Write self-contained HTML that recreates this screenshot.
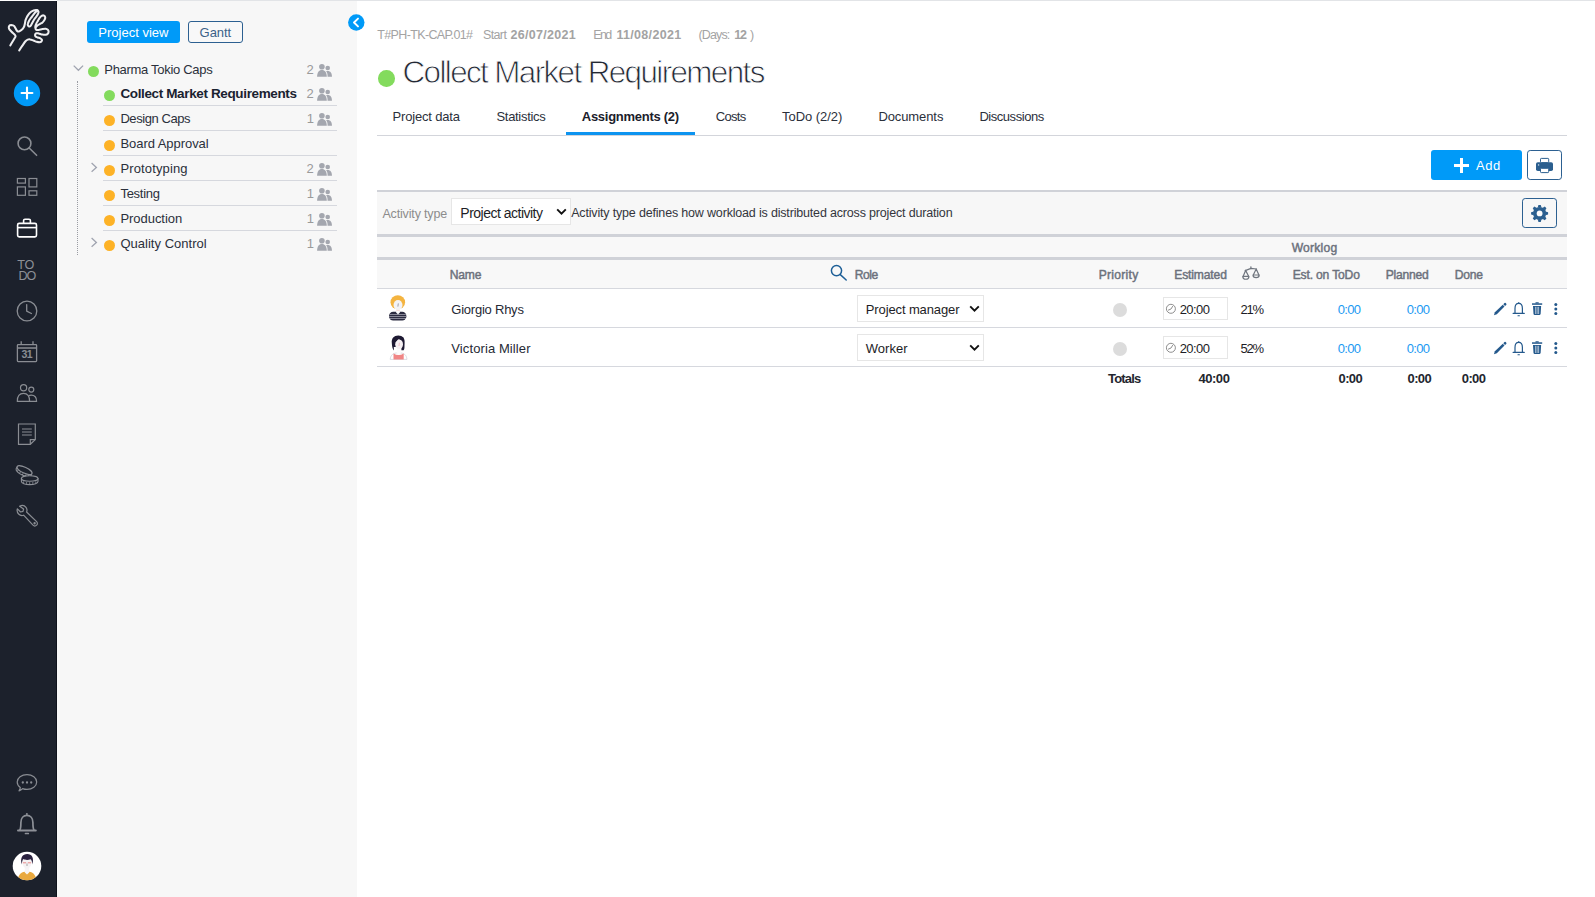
<!DOCTYPE html>
<html lang="en">
<head>
<meta charset="utf-8">
<title>Collect Market Requirements - Assignments</title>
<style>
html,body{margin:0;padding:0}
body{width:1595px;height:897px;position:relative;overflow:hidden;background:#fff;font-family:'Liberation Sans',sans-serif;}
.abs,.t,.dot,.tl,.ppl,.hl,.box,svg.i{position:absolute}
.t{white-space:pre;display:block}
#topline{left:57px;top:0;width:1538px;height:1px;background:#e2e4e7}
#side{left:0;top:1px;width:57px;height:896px;background:#1c212c}
#panel{left:57px;top:1px;width:300px;height:896px;background:#f7f7f7}
.dot{width:11.4px;height:11.4px;border-radius:50%}
.tl{left:103px;width:234px;height:1px;background:#d6d8de}
.ppl{fill:#a4a7af}
#vdots{left:77px;top:81px;width:0;height:174px;border-left:1px dotted #9a9ca3}
.btn{border-radius:3px;box-sizing:border-box}
.hl{background:#d0d2d8}
.rl{position:absolute;left:377px;width:1190px;height:1px;background:#d6d8de}
.sel{position:absolute;background:#fff;border:1px solid #e6e6e6;box-sizing:border-box}
.pri{position:absolute;width:14px;height:14px;border-radius:50%;background:#dcdcdc}
</style>
</head>
<body>
<div class="abs" id="topline"></div>
<div class="abs" id="side"></div>
<div class="abs" id="panel"></div>
<div class="abs" style="left:56px;top:1px;width:1px;height:896px;background:#0e121b"></div>

<!-- left panel buttons -->
<div class="abs btn" style="left:87px;top:21px;width:93px;height:22px;background:#009af8"></div>
<div class="abs btn" style="left:188px;top:21px;width:55px;height:22px;background:#f8f8f8;border:1px solid #2c6091"></div>
<div class="abs" id="vdots"></div>

<!-- collapse handle -->
<svg class="i" style="left:348px;top:14px" width="17" height="17" viewBox="0 0 17 17"><circle cx="8.3" cy="8.5" r="8.2" fill="#009af8"/><path d="M10 4.6 L6 8.5 L10 12.4" fill="none" stroke="#fff" stroke-width="1.9" stroke-linecap="round" stroke-linejoin="round"/></svg>

<!-- title dot -->
<div class="abs" style="left:378px;top:70.2px;width:16.6px;height:16.6px;border-radius:50%;background:#83db5d"></div>

<!-- tabs line -->
<div class="abs" style="left:377px;top:135px;width:1190px;height:1px;background:#d3d5db"></div>
<div class="abs" style="left:566px;top:131.5px;width:129px;height:3.5px;background:#0d94f0"></div>

<!-- add / print buttons -->
<div class="abs btn" style="left:1431px;top:150px;width:91px;height:30px;background:#009af8"></div>
<div class="abs" style="left:1454px;top:163.9px;width:15px;height:3.2px;background:#fff"></div>
<div class="abs" style="left:1459.9px;top:158px;width:3.2px;height:15px;background:#fff"></div>
<div class="abs btn" style="left:1527px;top:150px;width:35px;height:30px;background:#fff;border:1px solid #2c6091;border-radius:3.2px"></div>

<!-- filter bar -->
<div class="abs" style="left:377px;top:192px;width:1190px;height:42px;background:#f7f7f7"></div>
<div class="abs hl" style="left:377px;top:190px;width:1190px;height:2px"></div>
<div class="abs" style="left:377px;top:237px;width:1190px;height:51px;background:#f8f8f8"></div>
<div class="abs hl" style="left:377px;top:234px;width:1190px;height:3px"></div>
<div class="abs hl" style="left:377px;top:257px;width:1190px;height:3px"></div>
<div class="rl" style="top:288px"></div>
<div class="rl" style="top:327px"></div>
<div class="rl" style="top:366px"></div>
<div class="sel" style="left:451px;top:198px;width:120px;height:27px"></div>
<div class="abs btn" style="left:1522px;top:198px;width:35px;height:30px;background:#f7f7f7;border:1px solid #2c6091;border-radius:3.2px"></div>

<!-- row controls -->
<div class="sel" style="left:857px;top:295px;width:127px;height:27px"></div>
<div class="sel" style="left:857px;top:334px;width:127px;height:27px"></div>
<div class="sel" style="left:1163px;top:297px;width:65px;height:23px"></div>
<div class="sel" style="left:1163px;top:336px;width:65px;height:23px"></div>
<div class="pri" style="left:1113px;top:303px"></div>
<div class="pri" style="left:1113px;top:342px"></div>


<!-- ===== sidebar icons ===== -->
<svg class="i" style="left:0;top:0" width="57" height="57" viewBox="0 0 57 57"><path d="M10.8 45.4 C11.5 44.2 14.3 39.7 15.2 38.1 C16.1 36.5 16.4 36.6 15.9 35.6 C15.4 34.6 13.2 33.0 12.1 31.8 C11.0 30.6 9.9 29.6 9.5 28.6 C9.1 27.6 9.4 26.3 9.8 25.7 C10.2 25.1 11.0 25.1 11.8 25.1 C12.6 25.2 13.9 25.4 14.6 26.0 C15.3 26.6 15.7 27.8 16.2 28.6 C16.7 29.5 17.2 30.6 17.8 31.1 C18.4 31.6 18.9 31.6 19.7 31.4 C20.5 31.1 21.7 30.3 22.5 29.6 C23.3 28.9 23.9 27.9 24.4 27.0 C24.9 26.1 25.0 25.0 25.3 23.9 C25.6 22.8 25.7 21.4 26.0 20.3 C26.3 19.2 26.7 18.4 27.1 17.6 C27.5 16.8 27.9 16.1 28.4 15.4 C28.9 14.7 29.4 13.9 30.0 13.3 C30.6 12.7 31.2 12.1 31.8 11.7 C32.4 11.3 33.1 10.9 33.6 10.7 C34.1 10.4 34.5 10.3 35.0 10.2 C35.5 10.1 35.9 10.0 36.3 10.0 C36.7 10.0 37.1 10.0 37.5 10.1 C37.9 10.2 38.2 10.4 38.5 10.7 C38.8 11.0 38.9 11.3 39.0 11.7 C39.1 12.1 39.0 12.4 38.9 12.9 C38.8 13.4 38.5 13.9 38.3 14.4 C38.0 14.9 37.7 15.3 37.4 15.8 C37.1 16.3 36.7 16.8 36.3 17.3 C35.9 17.8 35.4 18.4 35.0 19.0 C34.6 19.6 34.2 20.3 33.8 21.0 C33.4 21.7 33.0 22.4 32.7 23.0 C32.4 23.6 32.1 24.2 31.8 24.7 C31.5 25.2 31.4 25.6 31.1 25.9 C30.8 26.2 30.5 26.5 30.1 26.5 C29.8 26.5 29.3 26.3 29.0 26.1 C28.7 25.9 28.5 25.6 28.4 25.2 C28.3 24.8 28.2 24.3 28.3 23.9 C28.4 23.4 28.6 23.0 28.8 22.5 C29.0 22.0 29.3 21.3 29.6 20.7 C29.9 20.1 30.3 19.6 30.7 19.0 C31.1 18.4 31.6 17.8 32.1 17.1 C32.6 16.5 33.1 15.7 33.6 15.1 C34.1 14.5 34.5 13.9 34.9 13.4 C35.3 12.9 35.7 12.6 36.0 12.3 C36.3 12.0 36.8 11.7 36.9 11.6 M36.2 28.6 C36.1 28.4 35.8 27.7 35.8 27.2 C35.8 26.7 35.9 26.0 36.1 25.4 C36.3 24.8 36.6 24.0 36.9 23.4 C37.2 22.8 37.6 22.1 38.0 21.5 C38.4 20.9 38.7 20.1 39.1 19.5 C39.5 18.9 39.9 18.2 40.3 17.7 C40.7 17.1 41.2 16.6 41.7 16.2 C42.2 15.8 42.6 15.5 43.1 15.4 C43.6 15.3 44.2 15.4 44.6 15.6 C45.0 15.8 45.3 16.2 45.5 16.6 C45.7 17.0 45.8 17.6 45.7 18.1 C45.7 18.6 45.5 19.0 45.2 19.5 C44.9 20.0 44.5 20.6 44.1 21.2 C43.7 21.8 43.2 22.4 42.6 22.8 C42.0 23.2 41.3 23.5 40.6 23.9 C39.9 24.3 39.2 24.6 38.6 25.0 C38.0 25.4 37.4 25.8 37.0 26.3 C36.6 26.8 36.0 27.6 36.0 28.2 C36.0 28.8 36.3 29.5 36.8 29.8 C37.3 30.1 38.2 30.1 39.2 30.0 C40.2 29.9 41.8 29.2 43.0 29.0 C44.2 28.8 45.3 28.6 46.2 28.7 C47.1 28.8 47.8 29.3 48.3 29.8 C48.8 30.3 49.1 30.9 49.1 31.6 C49.1 32.3 48.8 33.3 48.3 33.8 C47.8 34.3 47.1 34.7 46.2 34.8 C45.3 34.9 44.2 34.8 43.0 34.6 C41.8 34.4 40.2 33.7 39.2 33.5 C38.2 33.3 37.4 33.0 36.8 33.2 C36.2 33.4 35.7 34.1 35.6 34.6 C35.5 35.1 35.6 35.9 36.0 36.4 C36.4 36.9 37.4 37.2 38.2 37.5 C39.0 37.8 40.1 37.9 40.8 38.3 C41.5 38.7 42.2 39.2 42.4 39.7 C42.6 40.2 42.3 41.1 41.9 41.5 C41.5 41.9 40.8 42.2 40.0 42.3 C39.2 42.3 38.1 42.1 37.1 41.8 C36.1 41.5 35.0 40.9 33.9 40.5 C32.8 40.1 31.6 39.5 30.7 39.4 C29.8 39.2 29.0 39.3 28.2 39.6 C27.4 39.9 26.9 40.3 26.0 41.3 C25.1 42.3 23.9 44.2 22.9 45.7 C21.8 47.2 20.2 49.7 19.7 50.5" fill="none" stroke="#eeeef0" stroke-width="2.05" transform="translate(-0.5 0)" stroke-linecap="round" stroke-linejoin="round"/></svg>
<svg class="i" style="left:13px;top:79px" width="28" height="28" viewBox="0 0 28 28"><circle cx="14" cy="14" r="13.2" fill="#009af8"/><path d="M14 8.6V19.4M8.6 14H19.4" stroke="#fff" stroke-width="2.1" stroke-linecap="round"/></svg>
<svg class="i" style="left:14px;top:134px" width="28" height="26" viewBox="14 134 28 26" fill="none" stroke="#8a8d93" stroke-width="1.6"><circle cx="24.5" cy="143.4" r="6.4"/><path d="M29.2 148L36.6 155.3" stroke-linecap="round"/></svg>
<svg class="i" style="left:14px;top:175px" width="28" height="24" viewBox="14 175 28 24" fill="none" stroke="#8a8d93" stroke-width="1.2"><rect x="17.4" y="178.5" width="8" height="4.6"/><rect x="29" y="178.5" width="7.8" height="8.4"/><rect x="17.4" y="186.9" width="8" height="8.4"/><rect x="29" y="190.8" width="7.8" height="4.5"/></svg>
<svg class="i" style="left:14px;top:215px" width="28" height="26" viewBox="14 215 28 26" fill="none" stroke="#fff" stroke-width="1.6" stroke-linejoin="round"><rect x="17.6" y="223.4" width="18.9" height="13.5" rx="1.6"/><path d="M23.6 223.2V220.6Q23.6 219.2 25 219.2H29Q30.4 219.2 30.4 220.6V223.2"/><path d="M17.6 227.6H36.5"/></svg>
<svg class="i" style="left:14px;top:298px" width="28" height="26" viewBox="14 298 28 26" fill="none" stroke="#8a8d93" stroke-width="1.3"><circle cx="27" cy="311" r="9.8"/><path d="M26.7 304.6V311.2L31.4 313.5" stroke-linecap="round" stroke-linejoin="round"/></svg>
<svg class="i" style="left:14px;top:338px" width="28" height="28" viewBox="14 338 28 28" fill="none" stroke="#8a8d93" stroke-width="1.3"><rect x="17.4" y="344.6" width="19.2" height="17" rx="0.8"/><path d="M17.4 348H36.6M21.2 341.3V344.6M33 341.3V344.6"/></svg>
<svg class="i" style="left:14px;top:380px" width="28" height="26" viewBox="14 380 28 26" fill="none" stroke="#8a8d93" stroke-width="1.2"><circle cx="23.6" cy="387.8" r="3.1"/><circle cx="31.3" cy="389.6" r="2.5"/><path d="M17.3 401.4C17.3 396.4 19.8 393.4 23.5 393.4C27.2 393.4 29.6 396.4 29.6 401.4Z" stroke-linejoin="round"/><path d="M28.6 395.9C29.3 395.4 30.2 395.2 31.2 395.2C34.5 395.2 36.6 397.6 36.6 401.4H29.6" stroke-linejoin="round"/></svg>
<svg class="i" style="left:14px;top:420px" width="28" height="28" viewBox="14 420 28 28" fill="none" stroke="#8a8d93" stroke-width="1.2"><path d="M18.5 424H35.3V439.6L30.3 444.3H18.5Z" stroke-linejoin="miter"/><path d="M30.3 444.3V439.6H35.3"/><path d="M22 429H31.8M22 432H31.8M22 435H31.8"/></svg>
<svg class="i" style="left:13px;top:462px" width="30" height="26" viewBox="13 462 30 26" fill="none" stroke="#8d9097" stroke-width="1.1"><g transform="translate(0 0.7) rotate(25 24.3 470)"><path d="M16.1 469.4V471.7C16.1 473.4 19.8 474.8 24.3 474.8C28.8 474.8 32.5 473.4 32.5 471.7V469.4"/><ellipse cx="24.3" cy="469.4" rx="8.2" ry="2.9"/><path d="M18.4 472v2M21.2 472.6v2.1M24.3 472.8v2.1M27.4 472.6v2.1M30.2 472v2" stroke-width="0.8"/></g><path d="M21.4 478.5V481.5C21.4 483.2 25.1 484.6 29.7 484.6C34.3 484.6 38 483.2 38 481.5V478.5Z" fill="#1c212c"/><ellipse cx="29.7" cy="478.5" rx="8.3" ry="2.7" fill="#1c212c"/><path d="M23.6 481.4v2.2M26.6 482v2.2M29.7 482.2v2.2M32.8 482v2.2M35.8 481.4v2.2" stroke-width="0.8"/></svg>
<svg class="i" style="left:13px;top:502px" width="30" height="28" viewBox="13 502 30 28" fill="none" stroke="#8a8d93" stroke-width="1.2" stroke-linejoin="round"><path d="M19.6 506.2C21.8 505 24.6 505.5 26 507.4C27.1 508.9 27.2 510.6 26.6 512L36.6 521.6C37.6 522.6 37.6 524.2 36.6 525.2C35.6 526.2 34 526.2 33 525.2L23.6 515.2C22 515.8 20 515.4 18.6 514C17.2 512.6 16.8 510.6 17.4 508.8L20.6 512L23 511.4L23.6 509Z"/><circle cx="34.6" cy="523.3" r="0.6"/></svg>
<svg class="i" style="left:14px;top:771px" width="28" height="24" viewBox="14 771 28 24" fill="none" stroke="#8a8d93" stroke-width="1.2" stroke-linejoin="round"><path d="M27 774.6C32.4 774.6 36.7 777.9 36.7 782C36.7 786.1 32.4 789.4 27 789.4C25.4 789.4 23.9 789.1 22.6 788.6C21.6 789.6 20.4 790.4 19 790.8C19.8 789.8 20.2 788.8 20.3 787.6C18.4 786.2 17.2 784.2 17.2 782C17.2 777.9 21.6 774.6 27 774.6Z"/><g fill="#8a8d93" stroke="none"><circle cx="22.8" cy="782.5" r="1.15"/><circle cx="27" cy="782.5" r="1.15"/><circle cx="31.2" cy="782.5" r="1.15"/></g></svg>
<svg class="i" style="left:14px;top:810px" width="28" height="28" viewBox="14 810 28 28" fill="none" stroke="#8d9097" stroke-width="1.7" stroke-linejoin="round"><path d="M19.6 830.3C20.7 829 20.9 827 20.9 822.4C20.9 818 23.5 815.3 26.9 815.3C30.3 815.3 32.9 818 32.9 822.4C32.9 827 33.1 829 34.2 830.3"/><path d="M18 830.5H35.8" stroke-width="2" stroke-linecap="round"/><path d="M25.5 833.5H28.3" stroke-width="1.7" stroke-linecap="round"/><circle cx="26.9" cy="814" r="1" fill="#8d9097" stroke="none"/></svg>
<!-- user avatar -->
<svg class="i" style="left:12px;top:851px" width="30" height="30" viewBox="0 0 30 30"><defs><clipPath id="avc"><circle cx="15" cy="15" r="14.3"/></clipPath></defs><circle cx="15" cy="15" r="14.3" fill="#fff"/><g clip-path="url(#avc)"><path d="M5.8 30C5.8 23.4 9.4 20.4 15 20.4C20.6 20.4 24.2 23.4 24.2 30Z" fill="#e9a93f"/><path d="M12.8 16H17.2V21.4L15 23.4L12.8 21.4Z" fill="#f6f4f6"/><ellipse cx="15" cy="11.9" rx="4.5" ry="5.5" fill="#f5f2f4"/><path d="M9.8 13.4C7.8 7 10.6 3 15.2 3C20 3 22.2 7 20.4 13.4C20.2 10.8 19.6 9.2 18.6 8.2C16 9.4 12.8 9 11.2 8C10.4 9.2 10 11 9.8 13.4Z" fill="#2a2240"/><path d="M10.8 11.8H14.2M15.8 11.8H19.2" stroke="#e88a8a" stroke-width="1" fill="none"/><path d="M15 12.5V15" stroke="#555" stroke-width="0.5"/></g></svg>


<!-- tree chevrons -->
<svg class="i" style="left:72px;top:63px" width="13" height="10" viewBox="72 63 13 10"><path d="M73.7 65.6L78.4 70.3L83.1 65.6" fill="none" stroke="#a0a4b0" stroke-width="1.3"/></svg>
<svg class="i" style="left:89px;top:161px" width="10" height="13" viewBox="89 161 10 13"><path d="M91.6 163L96.4 167.4L91.6 171.8" fill="none" stroke="#a0a4b0" stroke-width="1.3"/></svg>
<svg class="i" style="left:89px;top:236px" width="10" height="13" viewBox="89 236 10 13"><path d="M91.6 238L96.4 242.4L91.6 246.8" fill="none" stroke="#a0a4b0" stroke-width="1.3"/></svg>
<!-- select arrows -->
<svg class="i" style="left:556px;top:207.5px" width="11" height="8" viewBox="0 0 11 8"><path d="M1.2 1.3L5.5 5.6L9.8 1.3" fill="none" stroke="#111" stroke-width="1.9"/></svg><svg class="i" style="left:969px;top:304.5px" width="11" height="8" viewBox="0 0 11 8"><path d="M1.2 1.3L5.5 5.6L9.8 1.3" fill="none" stroke="#111" stroke-width="1.9"/></svg><svg class="i" style="left:969px;top:343.5px" width="11" height="8" viewBox="0 0 11 8"><path d="M1.2 1.3L5.5 5.6L9.8 1.3" fill="none" stroke="#111" stroke-width="1.9"/></svg>
<!-- printer -->
<svg class="i" style="left:1534px;top:156px" width="22" height="19" viewBox="1534 156 22 19"><rect x="1536" y="162.3" width="17" height="8.7" rx="1.8" fill="#2b5f8f"/><rect x="1540.5" y="158.4" width="8.2" height="4.2" rx="0.8" fill="#fff" stroke="#2b5f8f" stroke-width="1"/><rect x="1540.5" y="168.3" width="8.2" height="4.3" rx="0.8" fill="#fff" stroke="#2b5f8f" stroke-width="1"/><circle cx="1538.6" cy="164.9" r="0.7" fill="#e8eef4"/></svg>
<!-- gear -->
<svg class="i" style="left:1529px;top:203px" width="21" height="21" viewBox="-10.6 -10.4 21 21"><g fill="#2b5f8f"><circle r="6.5"/><path d="M-1.9 -5.8L-1.15 -8.5H1.15L1.9 -5.8Z"/><path d="M-1.9 -5.8L-1.15 -8.5H1.15L1.9 -5.8Z" transform="rotate(45)"/><path d="M-1.9 -5.8L-1.15 -8.5H1.15L1.9 -5.8Z" transform="rotate(90)"/><path d="M-1.9 -5.8L-1.15 -8.5H1.15L1.9 -5.8Z" transform="rotate(135)"/><path d="M-1.9 -5.8L-1.15 -8.5H1.15L1.9 -5.8Z" transform="rotate(180)"/><path d="M-1.9 -5.8L-1.15 -8.5H1.15L1.9 -5.8Z" transform="rotate(225)"/><path d="M-1.9 -5.8L-1.15 -8.5H1.15L1.9 -5.8Z" transform="rotate(270)"/><path d="M-1.9 -5.8L-1.15 -8.5H1.15L1.9 -5.8Z" transform="rotate(315)"/></g><circle r="2.9" fill="#fbfbfb"/></svg>
<!-- header search + scale -->
<svg class="i" style="left:829px;top:263px" width="20" height="20" viewBox="829 263 20 20" fill="none" stroke="#1d5f97" stroke-width="1.5"><circle cx="836.5" cy="270.6" r="5.1"/><path d="M840.3 274.6L846.2 280" stroke-linecap="round"/></svg>
<svg class="i" style="left:1240px;top:265px" width="22" height="17" viewBox="1240 265 22 17" fill="none" stroke="#70767f" stroke-width="1.2" stroke-linecap="round" stroke-linejoin="round"><path d="M1245.2 270.6L1251 268.4L1256.4 269"/><path d="M1250.9 266.8V268.6"/><path d="M1245.6 270.4L1243.2 276.2M1245.6 270.4L1248.6 276.2"/><path d="M1242.8 276.4H1248.9C1248.9 280.2 1242.8 280.2 1242.8 276.4Z"/><path d="M1256.2 269L1253.4 274.8M1256.2 269L1258.8 274.8"/><path d="M1253 275H1259.2C1259.2 278.6 1253 278.6 1253 275Z"/></svg>
<svg class="i" style="left:1165px;top:303px" width="12" height="12" viewBox="1165 303 12 12" fill="none" stroke="#808080" stroke-width="0.9"><circle cx="1170.9" cy="308.8" r="4.5"/><path d="M1168.4 310.1L1171 309L1172.6 306.4" stroke-linecap="round" stroke-linejoin="round"/></svg><svg class="i" style="left:1165px;top:342px" width="12" height="12" viewBox="1165 303 12 12" fill="none" stroke="#808080" stroke-width="0.9"><circle cx="1170.9" cy="308.8" r="4.5"/><path d="M1168.4 310.1L1171 309L1172.6 306.4" stroke-linecap="round" stroke-linejoin="round"/></svg>
<svg class="i" style="left:388px;top:295px" width="20" height="27" viewBox="388 295 20 27"><rect x="389" y="311.8" width="17.4" height="8.8" rx="4.2" fill="#2b2b40"/><path d="M389.6 314.5H405.8M389.1 316.5H406.3M389.4 318.5H406" stroke="#d4d4de" stroke-width="0.55"/><path d="M396.2 309H399.8V312.4L398 314.6L396.2 312.4Z" fill="#fbfbfc"/><path d="M396.2 310.2H399.8" stroke="#f3c9c4" stroke-width="0.8"/><ellipse cx="397.8" cy="302.3" rx="7.3" ry="7" fill="#f4b440"/><ellipse cx="398" cy="305" rx="4.5" ry="5.1" fill="#f3f3f6"/><path d="M398.3 303.4L397.9 306.6" stroke="#4a4a5a" stroke-width="0.5"/></svg><svg class="i" style="left:388px;top:334px" width="21" height="27" viewBox="388 334 21 27"><path d="M390.2 359.4C390.6 355.2 392.8 352.8 398.6 352.8C404.4 352.8 406.6 355.2 407 359.4Z" fill="#fff" stroke="#c4c4cf" stroke-width="0.6"/><path d="M393.5 359.5V353.4Q398.6 356.4 403.7 353.4V359.5Z" fill="#f08585"/><path d="M396.7 348.6H400.9V353L398.8 354.8L396.7 353Z" fill="#fbfbfc"/><path d="M391.8 343C391.3 338.4 394 335.5 398.2 335.5C402.8 335.5 405.2 338.6 404.6 343.2C404.3 346.4 404.9 348.6 403.6 350.3H401.4V347H393.8L394 350.4C392.2 349 392.1 346 391.8 343Z" fill="#1e1a33"/><ellipse cx="399.1" cy="344.2" rx="3.9" ry="4.9" fill="#f6f0f3"/><path d="M394.6 342.6C396.4 341.6 397.8 340 398.4 338.2C399.8 339.6 401.8 340.4 403.6 340.6L403.2 337.2L397.4 336.2L394.4 338.8Z" fill="#1e1a33"/><path d="M399.4 342.8L399 346" stroke="#e9a0a8" stroke-width="0.6"/></svg>

<svg class="i" style="left:1491px;top:300px" width="70" height="18" viewBox="1491 300 70 18">
<g fill="#24598c" stroke="none">
<path d="M1493.9 315.2L1494.9 312.2L1502.75 304.7L1504.5 306.5L1496.8 314.2Z"/>
<path d="M1503.3 304.15L1504.5 303Q1505.1 302.5 1505.7 303.1L1506.3 303.7Q1506.8 304.3 1506.2 304.9L1505.05 306Z"/>
<rect x="1532" y="303.3" width="10.2" height="1.5"/><rect x="1535.4" y="302.2" width="3.4" height="1.4" rx="0.5"/>
<path d="M1533 306H1541.1L1540.6 314.1Q1540.5 314.9 1539.7 314.9H1534.4Q1533.6 314.9 1533.5 314.1Z"/>
<circle cx="1555.8" cy="304.5" r="1.5"/><circle cx="1555.8" cy="309.1" r="1.5"/><circle cx="1555.8" cy="313.6" r="1.5"/>
</g>
<g stroke="#dfe7ef" stroke-width="0.7"><path d="M1535.6 306.8V314M1537.1 306.8V314M1538.6 306.8V314"/></g>
<g fill="none" stroke="#24598c" stroke-width="1.2" stroke-linejoin="round"><path d="M1515 313.2V308.4C1515 305.4 1516.5 303.4 1518.7 303.4C1520.9 303.4 1522.4 305.4 1522.4 308.4V313.2"/><path d="M1513.2 313.4H1524.2" stroke-width="1.3" stroke-linecap="round"/><path d="M1518 315.7H1519.4" stroke-width="1.1" stroke-linecap="round"/><path d="M1518.7 302.3V303.4" stroke-width="1.2"/></g>
</svg>
<svg class="i" style="left:1491px;top:339px" width="70" height="18" viewBox="1491 300 70 18">
<g fill="#24598c" stroke="none">
<path d="M1493.9 315.2L1494.9 312.2L1502.75 304.7L1504.5 306.5L1496.8 314.2Z"/>
<path d="M1503.3 304.15L1504.5 303Q1505.1 302.5 1505.7 303.1L1506.3 303.7Q1506.8 304.3 1506.2 304.9L1505.05 306Z"/>
<rect x="1532" y="303.3" width="10.2" height="1.5"/><rect x="1535.4" y="302.2" width="3.4" height="1.4" rx="0.5"/>
<path d="M1533 306H1541.1L1540.6 314.1Q1540.5 314.9 1539.7 314.9H1534.4Q1533.6 314.9 1533.5 314.1Z"/>
<circle cx="1555.8" cy="304.5" r="1.5"/><circle cx="1555.8" cy="309.1" r="1.5"/><circle cx="1555.8" cy="313.6" r="1.5"/>
</g>
<g stroke="#dfe7ef" stroke-width="0.7"><path d="M1535.6 306.8V314M1537.1 306.8V314M1538.6 306.8V314"/></g>
<g fill="none" stroke="#24598c" stroke-width="1.2" stroke-linejoin="round"><path d="M1515 313.2V308.4C1515 305.4 1516.5 303.4 1518.7 303.4C1520.9 303.4 1522.4 305.4 1522.4 308.4V313.2"/><path d="M1513.2 313.4H1524.2" stroke-width="1.3" stroke-linecap="round"/><path d="M1518 315.7H1519.4" stroke-width="1.1" stroke-linecap="round"/><path d="M1518.7 302.3V303.4" stroke-width="1.2"/></g>
</svg>

<span class="t" style="left:104.3px;top:63.23px;font-size:13px;line-height:14.52px;letter-spacing:-0.301px;color:#2b303b;">Pharma Tokio Caps</span>
<span class="t" style="left:306.5px;top:63.23px;font-size:13px;line-height:14.52px;letter-spacing:-1.034px;color:#9a9a9a;">2</span>
<svg class="ppl" style="left:317px;top:63.9px" width="16" height="13" viewBox="0 0 16 13"><circle cx="4.9" cy="2.8" r="2.8"/><path d="M0.1 12.7C0.1 8.4 1.9 5.9 4.9 5.9C7.9 5.9 9.8 8.4 9.8 12.7Z"/><circle cx="10.7" cy="4" r="2.3"/><path d="M10.6 12.7C10.6 10 10.1 8.3 9.1 7.3C9.6 7 10.2 6.9 10.8 6.9C13.4 6.9 15 9 15 12.7Z"/></svg>
<div class="dot" style="left:87.7px;top:65.7px;background:#83db5d"></div>
<span class="t" style="left:120.4px;top:86.08px;font-size:13.5px;line-height:15.08px;letter-spacing:-0.364px;color:#1a2230;font-weight:700;">Collect Market Requirements</span>
<span class="t" style="left:306.5px;top:86.53px;font-size:13px;line-height:14.52px;letter-spacing:-1.034px;color:#9a9a9a;">2</span>
<svg class="ppl" style="left:317px;top:87.9px" width="16" height="13" viewBox="0 0 16 13"><circle cx="4.9" cy="2.8" r="2.8"/><path d="M0.1 12.7C0.1 8.4 1.9 5.9 4.9 5.9C7.9 5.9 9.8 8.4 9.8 12.7Z"/><circle cx="10.7" cy="4" r="2.3"/><path d="M10.6 12.7C10.6 10 10.1 8.3 9.1 7.3C9.6 7 10.2 6.9 10.8 6.9C13.4 6.9 15 9 15 12.7Z"/></svg>
<div class="dot" style="left:103.5px;top:90.1px;background:#83db5d"></div>
<span class="t" style="left:120.4px;top:111.53px;font-size:13px;line-height:14.52px;letter-spacing:-0.424px;color:#2b303b;">Design Caps</span>
<span class="t" style="left:306.7px;top:111.53px;font-size:13px;line-height:14.52px;letter-spacing:-2.834px;color:#9a9a9a;">1</span>
<svg class="ppl" style="left:317px;top:112.9px" width="16" height="13" viewBox="0 0 16 13"><circle cx="4.9" cy="2.8" r="2.8"/><path d="M0.1 12.7C0.1 8.4 1.9 5.9 4.9 5.9C7.9 5.9 9.8 8.4 9.8 12.7Z"/><circle cx="10.7" cy="4" r="2.3"/><path d="M10.6 12.7C10.6 10 10.1 8.3 9.1 7.3C9.6 7 10.2 6.9 10.8 6.9C13.4 6.9 15 9 15 12.7Z"/></svg>
<div class="dot" style="left:103.5px;top:115.1px;background:#fdb226"></div>
<span class="t" style="left:120.4px;top:136.54px;font-size:13px;line-height:14.52px;letter-spacing:-0.047px;color:#2b303b;">Board Approval</span>
<div class="dot" style="left:103.5px;top:140.1px;background:#fdb226"></div>
<span class="t" style="left:120.4px;top:161.54px;font-size:13px;line-height:14.52px;letter-spacing:0.143px;color:#2b303b;">Prototyping</span>
<span class="t" style="left:306.5px;top:161.54px;font-size:13px;line-height:14.52px;letter-spacing:-1.034px;color:#9a9a9a;">2</span>
<svg class="ppl" style="left:317px;top:162.9px" width="16" height="13" viewBox="0 0 16 13"><circle cx="4.9" cy="2.8" r="2.8"/><path d="M0.1 12.7C0.1 8.4 1.9 5.9 4.9 5.9C7.9 5.9 9.8 8.4 9.8 12.7Z"/><circle cx="10.7" cy="4" r="2.3"/><path d="M10.6 12.7C10.6 10 10.1 8.3 9.1 7.3C9.6 7 10.2 6.9 10.8 6.9C13.4 6.9 15 9 15 12.7Z"/></svg>
<div class="dot" style="left:103.5px;top:165.1px;background:#fdb226"></div>
<span class="t" style="left:120.4px;top:186.54px;font-size:13px;line-height:14.52px;letter-spacing:-0.251px;color:#2b303b;">Testing</span>
<span class="t" style="left:306.7px;top:186.54px;font-size:13px;line-height:14.52px;letter-spacing:-2.834px;color:#9a9a9a;">1</span>
<svg class="ppl" style="left:317px;top:187.9px" width="16" height="13" viewBox="0 0 16 13"><circle cx="4.9" cy="2.8" r="2.8"/><path d="M0.1 12.7C0.1 8.4 1.9 5.9 4.9 5.9C7.9 5.9 9.8 8.4 9.8 12.7Z"/><circle cx="10.7" cy="4" r="2.3"/><path d="M10.6 12.7C10.6 10 10.1 8.3 9.1 7.3C9.6 7 10.2 6.9 10.8 6.9C13.4 6.9 15 9 15 12.7Z"/></svg>
<div class="dot" style="left:103.5px;top:190.1px;background:#fdb226"></div>
<span class="t" style="left:120.4px;top:211.54px;font-size:13px;line-height:14.52px;letter-spacing:-0.040px;color:#2b303b;">Production</span>
<span class="t" style="left:306.7px;top:211.54px;font-size:13px;line-height:14.52px;letter-spacing:-2.834px;color:#9a9a9a;">1</span>
<svg class="ppl" style="left:317px;top:212.9px" width="16" height="13" viewBox="0 0 16 13"><circle cx="4.9" cy="2.8" r="2.8"/><path d="M0.1 12.7C0.1 8.4 1.9 5.9 4.9 5.9C7.9 5.9 9.8 8.4 9.8 12.7Z"/><circle cx="10.7" cy="4" r="2.3"/><path d="M10.6 12.7C10.6 10 10.1 8.3 9.1 7.3C9.6 7 10.2 6.9 10.8 6.9C13.4 6.9 15 9 15 12.7Z"/></svg>
<div class="dot" style="left:103.5px;top:215.1px;background:#fdb226"></div>
<span class="t" style="left:120.4px;top:236.54px;font-size:13px;line-height:14.52px;letter-spacing:0.023px;color:#2b303b;">Quality Control</span>
<span class="t" style="left:306.7px;top:236.54px;font-size:13px;line-height:14.52px;letter-spacing:-2.834px;color:#9a9a9a;">1</span>
<svg class="ppl" style="left:317px;top:237.9px" width="16" height="13" viewBox="0 0 16 13"><circle cx="4.9" cy="2.8" r="2.8"/><path d="M0.1 12.7C0.1 8.4 1.9 5.9 4.9 5.9C7.9 5.9 9.8 8.4 9.8 12.7Z"/><circle cx="10.7" cy="4" r="2.3"/><path d="M10.6 12.7C10.6 10 10.1 8.3 9.1 7.3C9.6 7 10.2 6.9 10.8 6.9C13.4 6.9 15 9 15 12.7Z"/></svg>
<div class="dot" style="left:103.5px;top:240.1px;background:#fdb226"></div>
<div class="tl" style="top:105px"></div>
<div class="tl" style="top:130px"></div>
<div class="tl" style="top:155px"></div>
<div class="tl" style="top:180px"></div>
<div class="tl" style="top:205px"></div>
<div class="tl" style="top:230px"></div>
<span class="t" style="left:377.3px;top:28.79px;font-size:12.5px;line-height:13.96px;letter-spacing:-0.641px;color:#a3a3a3;">T#PH-TK-CAP.01#</span>
<span class="t" style="left:482.9px;top:28.79px;font-size:12.5px;line-height:13.96px;letter-spacing:-0.602px;color:#a3a3a3;">Start</span>
<span class="t" style="left:510.5px;top:28.79px;font-size:12.5px;line-height:13.96px;letter-spacing:0.304px;color:#a3a3a3;font-weight:700;">26/07/2021</span>
<span class="t" style="left:593.2px;top:28.79px;font-size:12.5px;line-height:13.96px;letter-spacing:-1.575px;color:#a3a3a3;">End</span>
<span class="t" style="left:616.5px;top:28.79px;font-size:12.5px;line-height:13.96px;letter-spacing:0.303px;color:#a3a3a3;font-weight:700;">11/08/2021</span>
<span class="t" style="left:698.6px;top:28.79px;font-size:12.5px;line-height:13.96px;letter-spacing:-0.885px;color:#a3a3a3;">(Days:</span>
<span class="t" style="left:734.3px;top:28.79px;font-size:12.5px;line-height:13.96px;letter-spacing:-1.306px;color:#a3a3a3;font-weight:700;">12</span>
<span class="t" style="left:750.0px;top:28.79px;font-size:12.5px;line-height:13.96px;letter-spacing:-0.172px;color:#a3a3a3;">)</span>
<span class="t" style="left:402.5px;top:55.38px;font-size:31.4px;line-height:35.07px;letter-spacing:-1.610px;color:#232834;-webkit-text-stroke:0.85px #fff;">Collect Market Requirements</span>
<span class="t" style="left:392.6px;top:110.23px;font-size:13px;line-height:14.52px;letter-spacing:-0.180px;color:#2b303b;">Project data</span>
<span class="t" style="left:496.5px;top:110.23px;font-size:13px;line-height:14.52px;letter-spacing:-0.313px;color:#2b303b;">Statistics</span>
<span class="t" style="left:581.8px;top:110.23px;font-size:13px;line-height:14.52px;letter-spacing:-0.274px;color:#1b202b;font-weight:700;">Assignments (2)</span>
<span class="t" style="left:715.8px;top:110.23px;font-size:13px;line-height:14.52px;letter-spacing:-0.684px;color:#2b303b;">Costs</span>
<span class="t" style="left:782.0px;top:110.23px;font-size:13px;line-height:14.52px;letter-spacing:-0.045px;color:#2b303b;">ToDo (2/2)</span>
<span class="t" style="left:878.4px;top:110.23px;font-size:13px;line-height:14.52px;letter-spacing:-0.094px;color:#2b303b;">Documents</span>
<span class="t" style="left:979.4px;top:110.23px;font-size:13px;line-height:14.52px;letter-spacing:-0.456px;color:#2b303b;">Discussions</span>
<span class="t" style="left:98.3px;top:26.34px;font-size:13px;line-height:14.52px;letter-spacing:0.011px;color:#fff;">Project view</span>
<span class="t" style="left:199.6px;top:26.34px;font-size:13px;line-height:14.52px;letter-spacing:-0.074px;color:#3c6288;">Gantt</span>
<span class="t" style="left:1476.0px;top:159.04px;font-size:13px;line-height:14.52px;letter-spacing:0.530px;color:#fff;">Add</span>
<span class="t" style="left:382.4px;top:207.69px;font-size:12.5px;line-height:13.96px;letter-spacing:-0.157px;color:#8c8c8c;">Activity type</span>
<span class="t" style="left:460.3px;top:205.63px;font-size:14px;line-height:15.64px;letter-spacing:-0.503px;color:#1d1d26;">Project activity</span>
<span class="t" style="left:571.2px;top:207.19px;font-size:12.5px;line-height:13.96px;letter-spacing:-0.174px;color:#33353c;">Activity type defines how workload is distributed across project duration</span>
<span class="t" style="left:449.7px;top:269.05px;font-size:12.1px;line-height:13.52px;letter-spacing:-0.189px;color:#6c717c;-webkit-text-stroke:0.45px #6c717c;">Name</span>
<span class="t" style="left:854.8px;top:269.05px;font-size:12.1px;line-height:13.52px;letter-spacing:-0.458px;color:#6c717c;-webkit-text-stroke:0.45px #6c717c;">Role</span>
<span class="t" style="left:1098.7px;top:269.05px;font-size:12.1px;line-height:13.52px;letter-spacing:0.266px;color:#6c717c;-webkit-text-stroke:0.45px #6c717c;">Priority</span>
<span class="t" style="left:1174.3px;top:269.05px;font-size:12.1px;line-height:13.52px;letter-spacing:-0.148px;color:#6c717c;-webkit-text-stroke:0.45px #6c717c;">Estimated</span>
<span class="t" style="left:1292.7px;top:269.05px;font-size:12.1px;line-height:13.52px;letter-spacing:-0.166px;color:#6c717c;-webkit-text-stroke:0.45px #6c717c;">Est. on ToDo</span>
<span class="t" style="left:1385.8px;top:269.05px;font-size:12.1px;line-height:13.52px;letter-spacing:-0.248px;color:#6c717c;-webkit-text-stroke:0.45px #6c717c;">Planned</span>
<span class="t" style="left:1454.8px;top:269.05px;font-size:12.1px;line-height:13.52px;letter-spacing:-0.207px;color:#6c717c;-webkit-text-stroke:0.45px #6c717c;">Done</span>
<span class="t" style="left:1291.7px;top:242.05px;font-size:12.1px;line-height:13.52px;letter-spacing:0.227px;color:#6c717c;-webkit-text-stroke:0.45px #6c717c;">Worklog</span>
<span class="t" style="left:451.3px;top:303.24px;font-size:13px;line-height:14.52px;letter-spacing:-0.231px;color:#262a35;">Giorgio Rhys</span>
<span class="t" style="left:865.8px;top:303.24px;font-size:13px;line-height:14.52px;letter-spacing:-0.121px;color:#1d1d26;">Project manager</span>
<span class="t" style="left:1179.7px;top:303.24px;font-size:13px;line-height:14.52px;letter-spacing:-0.562px;color:#1d1d26;">20:00</span>
<span class="t" style="left:1240.5px;top:303.24px;font-size:13px;line-height:14.52px;letter-spacing:-1.266px;color:#1d1d26;">21%</span>
<span class="t" style="left:1337.8px;top:303.24px;font-size:13px;line-height:14.52px;letter-spacing:-0.737px;color:#1b9af2;">0:00</span>
<span class="t" style="left:1406.8px;top:303.24px;font-size:13px;line-height:14.52px;letter-spacing:-0.671px;color:#1b9af2;">0:00</span>
<span class="t" style="left:451.3px;top:342.24px;font-size:13px;line-height:14.52px;letter-spacing:0.101px;color:#262a35;">Victoria Miller</span>
<span class="t" style="left:865.8px;top:342.24px;font-size:13px;line-height:14.52px;letter-spacing:0.009px;color:#1d1d26;">Worker</span>
<span class="t" style="left:1179.7px;top:342.24px;font-size:13px;line-height:14.52px;letter-spacing:-0.562px;color:#1d1d26;">20:00</span>
<span class="t" style="left:1240.5px;top:342.24px;font-size:13px;line-height:14.52px;letter-spacing:-1.266px;color:#1d1d26;">52%</span>
<span class="t" style="left:1337.8px;top:342.24px;font-size:13px;line-height:14.52px;letter-spacing:-0.737px;color:#1b9af2;">0:00</span>
<span class="t" style="left:1406.8px;top:342.24px;font-size:13px;line-height:14.52px;letter-spacing:-0.671px;color:#1b9af2;">0:00</span>
<span class="t" style="left:1108.0px;top:372.24px;font-size:13px;line-height:14.52px;letter-spacing:-0.826px;color:#23262e;font-weight:700;">Totals</span>
<span class="t" style="left:1198.4px;top:372.24px;font-size:13px;line-height:14.52px;letter-spacing:-0.438px;color:#23262e;font-weight:700;">40:00</span>
<span class="t" style="left:1338.6px;top:372.24px;font-size:13px;line-height:14.52px;letter-spacing:-0.644px;color:#23262e;font-weight:700;">0:00</span>
<span class="t" style="left:1407.6px;top:372.24px;font-size:13px;line-height:14.52px;letter-spacing:-0.644px;color:#23262e;font-weight:700;">0:00</span>
<span class="t" style="left:1461.8px;top:372.24px;font-size:13px;line-height:14.52px;letter-spacing:-0.644px;color:#23262e;font-weight:700;">0:00</span>
<span class="t" style="left:17.3px;top:257.50px;font-size:12.6px;line-height:14.07px;letter-spacing:-0.366px;color:#8d9097;">TO</span>
<span class="t" style="left:18.4px;top:268.60px;font-size:12.6px;line-height:14.07px;letter-spacing:-0.891px;color:#8d9097;">DO</span>
<span class="t" style="left:21.6px;top:349.21px;font-size:10.6px;line-height:11.84px;letter-spacing:-0.797px;color:#8a8d93;font-weight:700;">31</span>
</body>
</html>
